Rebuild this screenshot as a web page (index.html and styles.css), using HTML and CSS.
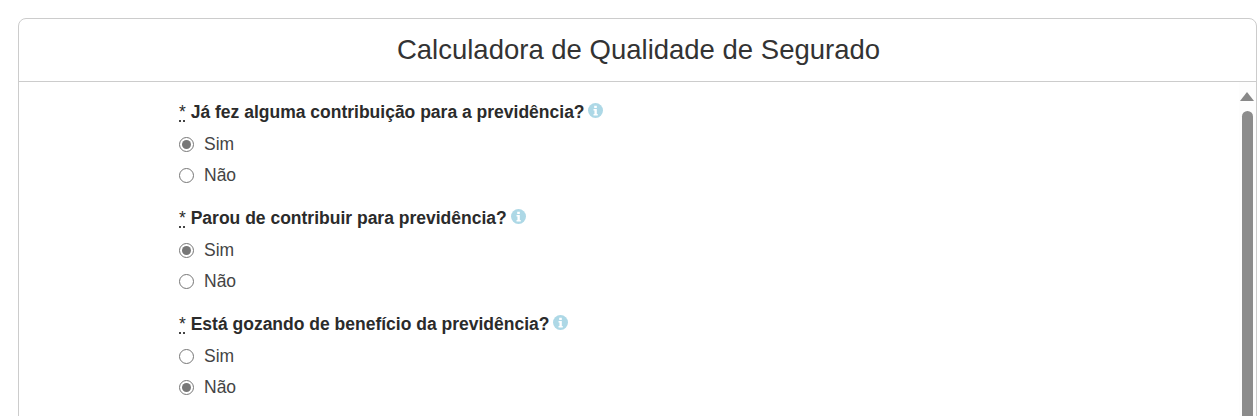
FILE: index.html
```html
<!DOCTYPE html>
<html lang="pt">
<head>
<meta charset="utf-8">
<title>Calculadora de Qualidade de Segurado</title>
<link rel="stylesheet" href="styles.css">
</head>
<body>
<svg class="defs" width="0" height="0" aria-hidden="true">
  <symbol id="info" viewBox="0 0 16 16">
    <circle cx="8" cy="8" r="8" fill="#add8e6"/>
    <path d="M6.6 2.9h2.8v2.3H6.6zM5.9 6.4h3.5v5.2h1v1.6H5.9v-1.6h1V8H5.9z" fill="#fff"/>
  </symbol>
</svg>
<main class="card">
  <h1 class="card-title">Calculadora de Qualidade de Segurado</h1>
  <div class="card-body">
    <form class="form">
      <fieldset class="question">
        <legend class="question-label"><abbr class="req">*</abbr> Já fez alguma contribuição para a previdência? <svg class="info"><use href="#info"/></svg></legend>
        <label class="option"><input type="radio" name="q1" checked> Sim</label>
        <label class="option"><input type="radio" name="q1"> Não</label>
      </fieldset>
      <fieldset class="question">
        <legend class="question-label"><abbr class="req">*</abbr> Parou de contribuir para previdência? <svg class="info"><use href="#info"/></svg></legend>
        <label class="option"><input type="radio" name="q2" checked> Sim</label>
        <label class="option"><input type="radio" name="q2"> Não</label>
      </fieldset>
      <fieldset class="question">
        <legend class="question-label"><abbr class="req">*</abbr> Está gozando de benefício da previdência? <svg class="info"><use href="#info"/></svg></legend>
        <label class="option"><input type="radio" name="q3"> Sim</label>
        <label class="option"><input type="radio" name="q3" checked> Não</label>
      </fieldset>
    </form>
    <div class="scrollbar" aria-hidden="true">
      <span class="scroll-arrow"></span>
      <span class="scroll-thumb"></span>
    </div>
  </div>
</main>
</body>
</html>
```
FILE: styles.css
```css
* { box-sizing: border-box; }
html, body { height: 100%; }
body {
  margin: 0;
  padding: 18px 3px 0 18px;
  overflow: hidden;
  background: #fff;
  font-family: "Liberation Sans", Arial, sans-serif;
  color: #333;
}
.defs { display: block; height: 0; }
.card {
  height: 460px;
  border: 1px solid #ccc;
  border-radius: 8px;
}
.card-title {
  margin: 0;
  height: 63px;
  padding-left: 2px;
  line-height: 61px;
  border-bottom: 1px solid #ccc;
  text-align: center;
  font-size: 27.5px;
  font-weight: 400;
  color: #333;
}
.card-body { display: flex; height: 400px; }
.form { flex: 1; padding: 19px 0 0 160px; }
.question { margin: 0 0 5px; padding: 0; border: 0; height: 101px; }
.question-label {
  display: block;
  padding: 0;
  height: 28px;
  line-height: 23px;
  font-size: 17.5px;
  font-weight: 700;
  color: #2b2b2b;
}
.req {
  font-weight: 400;
  text-decoration: underline dotted;
  text-underline-offset: 3px;
}
.info { width: 15px; height: 15px; vertical-align: 0; margin-left: -1px; }
.option {
  display: flex;
  align-items: center;
  height: 31px;
  font-size: 17.5px;
  color: #444;
  gap: 10px;
}
.option input { width: 15px; height: 15px; margin: 0; accent-color: #777; flex: none; }
.scrollbar {
  width: 17px;
  padding: 10px 1px 0 0;
  display: flex;
  flex-direction: column;
  align-items: center;
  gap: 10px;
  background: #fdfdfd;
}
.scroll-arrow {
  width: 0;
  height: 0;
  border-left: 7px solid transparent;
  border-right: 7px solid transparent;
  border-bottom: 9px solid #888;
}
.scroll-thumb {
  flex: 1;
  width: 11px;
  border-radius: 6px 6px 0 0;
  background: #8c8c8c;
}
```
